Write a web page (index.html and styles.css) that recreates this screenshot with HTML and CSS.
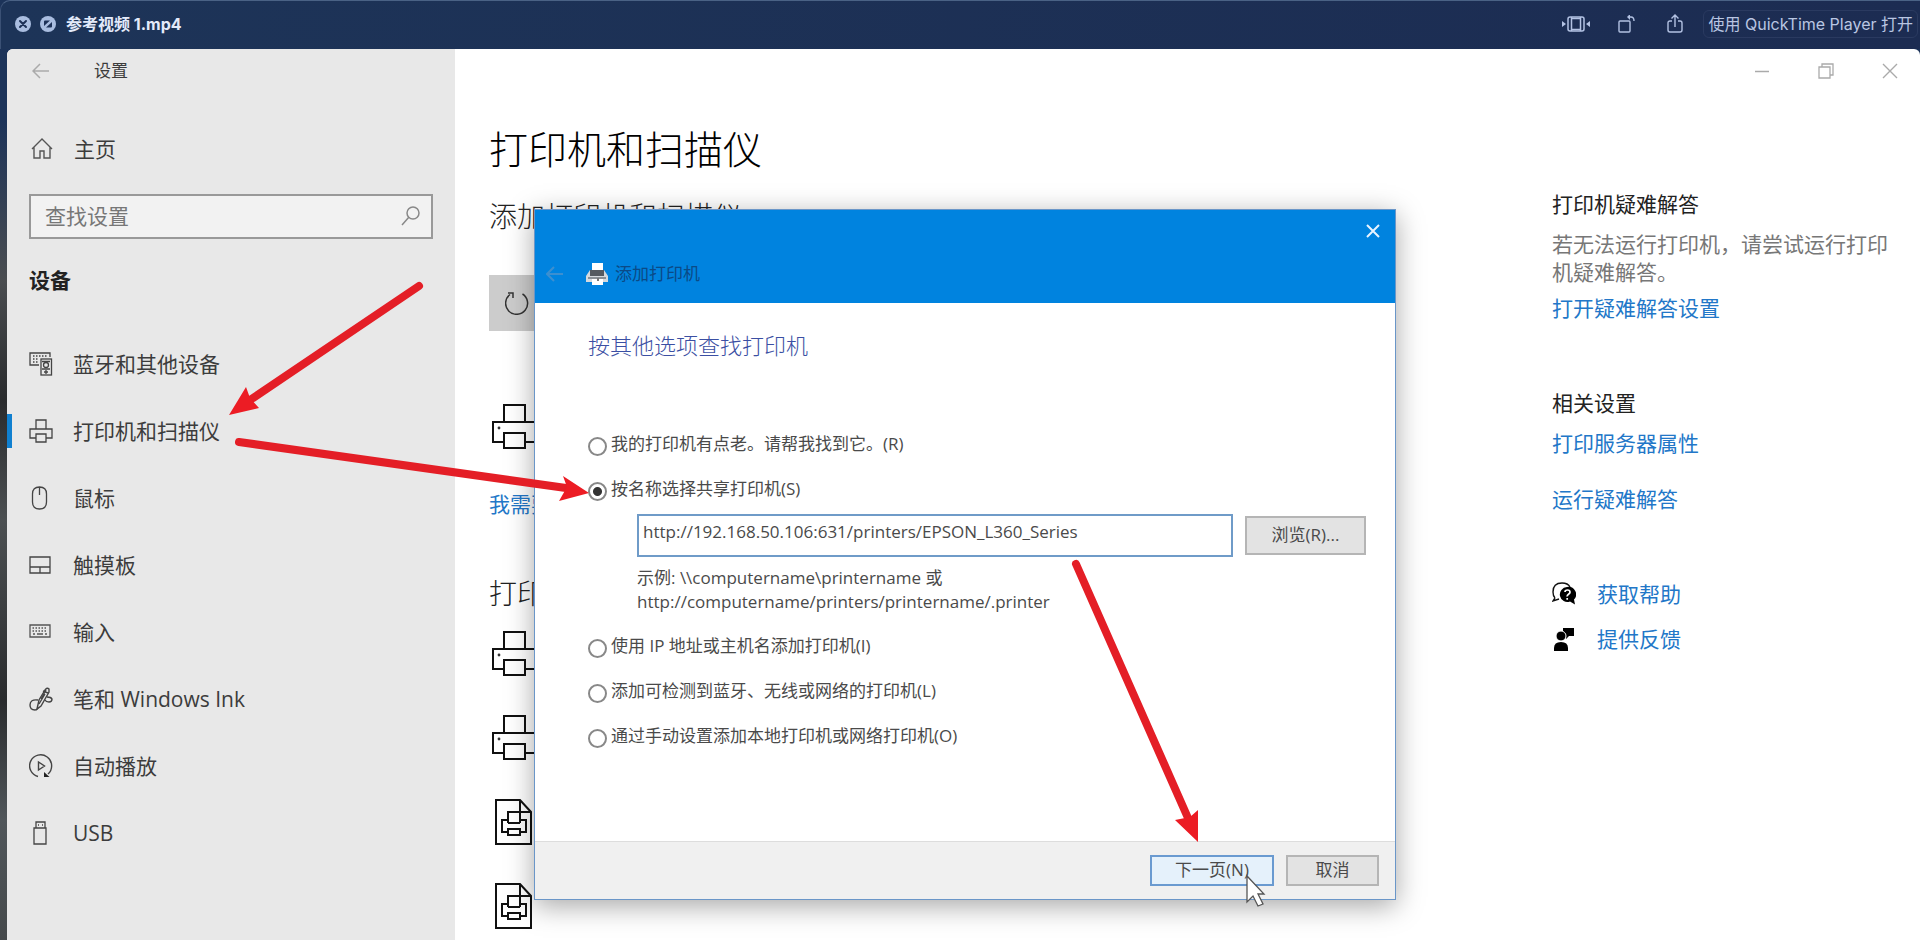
FILE: index.html
```html
<!DOCTYPE html>
<html lang="zh-CN">
<head>
<meta charset="utf-8">
<title>参考视频1.mp4</title>
<link rel="stylesheet" href="styles.css">
</head>
<body>
<svg class="defs" aria-hidden="true">
  <symbol id="i-printer" viewBox="0 0 48 46"><g fill="none" stroke="#111" stroke-width="2"><path d="M12 18V1h21v17M12 38H1V18h46v20H33M12 29h21v15H12z"/></g><circle cx="7" cy="24" r="1.4" fill="#333"/></symbol>
  <symbol id="i-docprinter" viewBox="0 0 38 46"><g fill="none" stroke="#111" stroke-width="2"><path d="M1 1h24l11 12v32H1zM25 1v12h11"/><path d="M13 24V13h12v11M13 33H7V21h6M25 21h6v12h-6M13 24h12M13 30h12v6H13z"/></g></symbol>
</svg>

<header class="titlebar">
  <button class="tb-icon" aria-label="关闭"><svg width="16" height="16" viewBox="0 0 16 16"><circle cx="8" cy="8" r="8" fill="#a9bde0"/><path d="M5 5l6 6M11 5l-6 6" stroke="#1d3157" stroke-width="2" stroke-linecap="round"/></svg></button>
  <button class="tb-icon" aria-label="全屏"><svg width="16" height="16" viewBox="0 0 16 16"><circle cx="8" cy="8" r="8" fill="#a9bde0"/><path d="M4 10V5.500q0-1 1-1h5zM12 6v4.500q0 1-1 1H6z" fill="#1d3157"/></svg></button>
  <h1 class="file-name">参考视频 1.mp4</h1>
  <div class="tb-tools">
    <button class="tb-tool" aria-label="修剪"><svg width="28" height="18" viewBox="0 0 28 18"><g fill="none" stroke="#b3c2e3" stroke-width="1.500"><rect x="6" y="2" width="16" height="14" rx="2"/><path d="M9.500 2v14M18.500 2v14M9.500 3.500h9M9.500 14.500h9"/></g><path d="M0 6l4 3-4 3zM28 6l-4 3 4 3z" fill="#b3c2e3"/></svg></button>
    <button class="tb-tool" aria-label="旋转"><svg width="18" height="18" viewBox="0 0 18 18"><g fill="none" stroke="#b3c2e3" stroke-width="1.400"><rect x="1" y="6" width="11" height="11" rx="1"/><path d="M11 2h2q3 0 3 4"/></g><path d="M12 -1v6l-3-3z" fill="#b3c2e3"/></svg></button>
    <button class="tb-tool" aria-label="共享"><svg width="16" height="20" viewBox="0 0 16 20"><g fill="none" stroke="#b3c2e3" stroke-width="1.400"><path d="M5 7H3Q1 7 1 9v7q0 2 2 2h10q2 0 2-2V9q0-2-2-2h-2M8 13V1M4.500 4.500L8 1l3.500 3.500"/></g></svg></button>
    <button class="open-with">使用 QuickTime Player 打开</button>
  </div>
</header>

<div class="video">
  <nav class="sidebar">
    <div class="side-top">
      <button class="plain" aria-label="返回"><svg width="18" height="16" viewBox="0 0 18 16"><path d="M17 8H1M8 1L1 8l7 7" fill="none" stroke="#aaa" stroke-width="1.500"/></svg></button>
      <span>设置</span>
    </div>
    <a class="home" href="#"><svg width="22" height="22" viewBox="0 0 22 22"><path d="M1 11L11 1l10 10M3 9v11h6v-7h4v7h6V9" fill="none" stroke="#555" stroke-width="1.400"/></svg>主页</a>
    <label class="search"><input type="text" placeholder="查找设置" aria-label="查找设置"><svg width="20" height="20" viewBox="0 0 20 20"><g fill="none" stroke="#888" stroke-width="1.500"><circle cx="12" cy="7" r="6"/><path d="M8 11L1 19"/></g></svg></label>
    <h2 class="group">设备</h2>
    <ul class="nav">
      <li><a href="#"><svg width="24" height="24" viewBox="0 0 24 24"><g fill="none" stroke="#444" stroke-width="1.300"><path d="M10 13H1V1h20v4"/><path d="M4 4h15M4 7h6M4 10h6" stroke-dasharray="1.500 1.500"/><rect x="12" y="7" width="10.500" height="16"/><circle cx="17" cy="13" r="2.500"/><path d="M13 9.500h8M13 17h8M17 18v4M15 20h4"/></g></svg>蓝牙和其他设备</a></li>
      <li class="active"><a href="#"><svg width="24" height="24" viewBox="0 0 24 24"><path d="M7 10V1h10v9M7 19H1v-9h22v9h-6M7 15h10v8H7z" fill="none" stroke="#444" stroke-width="1.300"/></svg>打印机和扫描仪</a></li>
      <li><a href="#"><svg width="24" height="24" viewBox="0 0 24 24"><path d="M10.500 1q7 0 7 7v8q0 7-7 7t-7-7V8q0-7 7-7zM10.500 1v8" fill="none" stroke="#444" stroke-width="1.300"/></svg>鼠标</a></li>
      <li><a href="#"><svg width="24" height="24" viewBox="0 0 24 24"><path d="M1 4h20v16H1zM1 14h20M11 14v6" fill="none" stroke="#444" stroke-width="1.300"/></svg>触摸板</a></li>
      <li><a href="#"><svg width="24" height="24" viewBox="0 0 24 24"><g fill="none" stroke="#555" stroke-width="1.300"><path d="M1 5h20v12H1z"/><path d="M3.500 8h15M3.500 11h15" stroke-dasharray="1.500 1.500"/><path d="M4 14h2M8 14h6M16 14h2"/></g></svg>输入</a></li>
      <li><a href="#"><svg width="24" height="24" viewBox="0 0 24 24"><g fill="none" stroke="#444" stroke-width="1.400"><path d="M8 22l2-9 6-10q2-3 4-1l0 3-8 14z"/><path d="M12 12l5-9M14 4l5 2M10 17l6-10"/><path d="M9 13q-8-1-8 5 0 5 5 5 2 0 3-2M18 10q4 0 5 2 0 3-3 3t-4-2"/></g></svg>笔和 Windows Ink</a></li>
      <li><a href="#"><svg width="24" height="24" viewBox="0 0 24 24"><path d="M9 22.500A11 11 0 1 1 19 20M9.500 8v8l6-4z" fill="none" stroke="#444" stroke-width="1.400"/><path d="M15 18v5h5.500z" fill="#222"/></svg>自动播放</a></li>
      <li><a href="#"><svg width="24" height="24" viewBox="0 0 24 24"><path d="M5 7h12v16H5zM7 7V1h9v6M9 4h1M13 4h1" fill="none" stroke="#444" stroke-width="1.300"/></svg>USB</a></li>
    </ul>
  </nav>

  <main class="main">
    <div class="win-controls">
      <button class="plain" aria-label="最小化"><svg width="16" height="16" viewBox="0 0 16 16"><path d="M1 8.500h14" stroke="#aaa" stroke-width="1.300"/></svg></button>
      <button class="plain" aria-label="还原"><svg width="16" height="16" viewBox="0 0 16 16"><path d="M1 4h11v11H1zM4 4V1h11v11h-3" fill="none" stroke="#aaa" stroke-width="1.300"/></svg></button>
      <button class="plain" aria-label="关闭窗口"><svg width="16" height="16" viewBox="0 0 16 16"><path d="M1 1l14 14M15 1L1 15" stroke="#aaa" stroke-width="1.400"/></svg></button>
    </div>
    <div class="columns">
      <section class="content">
        <h2 class="page-title">打印机和扫描仪</h2>
        <h3 class="sub">添加打印机和扫描仪</h3>
        <button class="refresh" aria-label="刷新"><svg width="24" height="24" viewBox="0 0 24 24"><path d="M17.500 3A11 11 0 1 1 5 3.500M3 2h5v5" fill="none" stroke="#333" stroke-width="1.500"/></svg></button>
        <svg class="scanner" width="48" height="46"><use href="#i-printer"/></svg>
        <a class="link need" href="#">我需要</a>
        <h3 class="sub list-title">打印</h3>
        <ul class="devices">
          <li><svg width="48" height="46"><use href="#i-printer"/></svg></li>
          <li><svg width="48" height="46"><use href="#i-printer"/></svg></li>
          <li class="doc"><svg width="38" height="46"><use href="#i-docprinter"/></svg></li>
          <li class="doc"><svg width="38" height="46"><use href="#i-docprinter"/></svg></li>
        </ul>
      </section>
      <aside class="aside">
        <h4>打印机疑难解答</h4>
        <p>若无法运行打印机，请尝试运行打印机疑难解答。</p>
        <a class="link" href="#">打开疑难解答设置</a>
        <h4 class="related">相关设置</h4>
        <a class="link server" href="#">打印服务器属性</a>
        <a class="link run" href="#">运行疑难解答</a>
        <a class="link help" href="#"><svg width="24" height="24" viewBox="0 0 24 24"><path d="M3 16q-2-2-2-6 0-9 9-9 6 0 8 4M3 16l-2 3 6-2" fill="none" stroke="#111" stroke-width="1.400"/><path d="M15 5a7.500 7.500 0 1 0 3 14.500l5 3-1-5A7.500 7.500 0 0 0 15 5z" fill="#000"/><path d="M13 10q0-2 2.500-2t2.500 2.200q0 1-1.500 2t-1.300 2.300M15.200 16v1.800" fill="none" stroke="#fff" stroke-width="1.700"/></svg>获取帮助</a>
        <a class="link feedback" href="#"><svg width="24" height="24" viewBox="0 0 24 24"><path d="M11 1h11v8h-5l-3 3V9h-3z"/><circle cx="9" cy="9" r="5" stroke="#fff"/><path d="M2 24v-3q0-6 7-6t7 6v3z"/></svg>提供反馈</a>
      </aside>
    </div>

    <form class="dialog" role="dialog" aria-label="添加打印机">
      <div class="dlg-head">
        <button type="button" class="plain dlg-close" aria-label="关闭对话框"><svg width="16" height="16" viewBox="0 0 16 16"><path d="M2 2l12 12M14 2L2 14" stroke="#e8f4ff" stroke-width="2"/></svg></button>
        <div class="dlg-name">
          <svg width="18" height="16" viewBox="0 0 18 16"><path d="M17 8H2M8 1L1 8l7 7" fill="none" stroke="#3c8fd0" stroke-width="2"/></svg>
          <svg class="dlg-printer" width="24" height="24" viewBox="0 0 24 24"><path d="M7 1h11v8H7z" fill="#fff"/><path d="M1 14l4-6h14l4 6v6H1z" fill="#d5d9dd"/><path d="M5 8h14v6H5z" fill="#555a60"/><path d="M3 15h18v2H3z" fill="#8a9096"/><path d="M7 17h11v6H7z" fill="#fff"/><path d="M12 16h2v3h-2z" fill="#777"/></svg>
          <span>添加打印机</span>
        </div>
      </div>
      <div class="dlg-body">
        <h3 class="dlg-title">按其他选项查找打印机</h3>
        <label class="opt"><input type="radio" name="how">我的打印机有点老。请帮我找到它。(R)</label>
        <label class="opt"><input type="radio" name="how" checked>按名称选择共享打印机(S)</label>
        <div class="path-row">
          <input class="path" type="text" aria-label="打印机地址" value="http://192.168.50.106:631/printers/EPSON_L360_Series">
          <button type="button" class="btn browse">浏览(R)...</button>
        </div>
        <p class="example">示例: \\computername\printername 或<br>http://computername/printers/printername/.printer</p>
        <label class="opt"><input type="radio" name="how">使用 IP 地址或主机名添加打印机(I)</label>
        <label class="opt"><input type="radio" name="how">添加可检测到蓝牙、无线或网络的打印机(L)</label>
        <label class="opt"><input type="radio" name="how">通过手动设置添加本地打印机或网络打印机(O)</label>
      </div>
      <div class="dlg-foot">
        <button type="button" class="btn next">下一页(N)</button>
        <button type="button" class="btn cancel">取消</button>
      </div>
    </form>
  </main>
</div>

<svg class="marks" width="1920" height="940" viewBox="0 0 1920 940" aria-hidden="true">
  <g stroke="#e41e26" stroke-width="8" stroke-linecap="round"><path d="M419 286L250 400M239 442L566 488M1076 564L1188 818"/></g>
  <g fill="#ec1c24"><path d="M229 415L246 387 250 398 259 408z"/><path d="M589 493L563 476 567 487 559 501z"/><path d="M1198 842L1175 820 1190 817 1198 810z"/></g>
  <path d="M1247 876v26l6-6 5 10 5-2-5-10h6z" fill="#fff" stroke="#555" stroke-width="1.300"/>
</svg>
</body>
</html>
```

FILE: styles.css
```css
* { box-sizing: border-box; }
body {
  margin: 0;
  height: 100vh;
  display: flex;
  flex-direction: column;
  overflow: hidden;
  position: relative;
  background: linear-gradient(#1c3359, #1c3359 120px, #4a4d50 280px, #292b2d 400px, #4c5052 520px, #292b2d 700px, #50565a 820px, #45494b);
  font-family: "Open Sans", "Noto Sans CJK SC", sans-serif;
  font-size: 21px;
  line-height: 28px;
  color: #3c3c3c;
}
h1, h2, h3, h4, p, ul { margin: 0; padding: 0; font-weight: 400; }
ul { list-style: none; }
a { color: inherit; text-decoration: none; }
button, input { font: inherit; color: inherit; margin: 0; }
svg { display: block; flex: none; }
.defs { position: absolute; width: 0; height: 0; }
.plain { border: 0; background: none; padding: 0; }

.titlebar {
  height: 49px;
  flex: none;
  display: flex;
  align-items: center;
  padding: 0 2px 2px 14px;
  background: linear-gradient(90deg, #1d3458, #1c2c52);
  border-top: 1px solid #4a6285;
  border-left: 1px solid #3b5175;
  border-radius: 10px 0 0 0;
}
.tb-icon, .tb-tool { border: 0; background: none; padding: 0; }
.tb-icon { margin-right: 9px; }
.file-name {
  font-family: Inter, "Noto Sans CJK SC", sans-serif;
  font-size: 16px;
  font-weight: 700;
  line-height: 24px;
  color: #e3eafa;
  margin-left: 1px;
}
.tb-tools { margin-left: auto; display: flex; align-items: center; }
.tb-tool { margin-right: 28px; }
.tb-tool + .tb-tool { margin-right: 31px; }
.tb-tool + .tb-tool + .tb-tool { margin-right: 20px; }
.open-with {
  font-family: Inter, "Noto Sans CJK SC", sans-serif;
  font-size: 16px;
  line-height: 24px;
  height: 28px;
  color: #b9c6e2;
  background: none;
  border: 1px solid #2a3a60;
  border-radius: 6px;
  padding: 0 4px;
  white-space: nowrap;
}

.video {
  flex: 1;
  min-height: 0;
  display: flex;
  margin-left: 7px;
  border-radius: 6px 6px 0 0;
  overflow: hidden;
  background: #fff;
}
.sidebar { width: 448px; flex: none; background: #e8e8e8; }
.side-top {
  height: 44px;
  display: flex;
  align-items: center;
  gap: 44px;
  padding-left: 25px;
  font-size: 17px;
}
.home {
  display: flex;
  align-items: center;
  gap: 21px;
  height: 40px;
  margin-top: 36px;
  padding-left: 24px;
}
.search {
  display: flex;
  align-items: center;
  height: 45px;
  margin: 25px 22px 0;
  padding: 0 10px 2px 14px;
  border: 2px solid #999;
  background: #f2f2f2;
}
.search input {
  flex: 1;
  min-width: 0;
  border: 0;
  outline: 0;
  padding: 0;
  background: none;
}
.search input::placeholder { color: #777; opacity: 1; }
.group { margin: 27px 0 0 22px; font-size: 21px; font-weight: 700; color: #222; }
.nav { margin-top: 36px; }
.nav a {
  display: flex;
  align-items: center;
  gap: 20px;
  height: 67px;
  padding-left: 22px;
}
.nav .active { background: linear-gradient(#1080d0, #1080d0) left center / 5px 34px no-repeat; }

.main { flex: 1; min-width: 0; position: relative; }
.win-controls {
  height: 44px;
  display: flex;
  justify-content: flex-end;
  align-items: center;
  gap: 48px;
  padding-right: 22px;
}
.columns { display: flex; justify-content: space-between; padding: 0 24px 0 34px; }
.content { padding-top: 31px; }
.page-title { font-size: 39px; line-height: 50px; font-weight: 300; color: #000; }
.sub { font-size: 28px; line-height: 36px; font-weight: 300; margin-top: 24px; color: #222; }
.refresh {
  display: flex;
  align-items: center;
  width: 300px;
  height: 56px;
  margin-top: 41px;
  padding: 0 16px;
  border: 0;
  background: #ccc;
}
.scanner { margin: 73px 0 0 3px; }
.link { display: block; color: #2277c8; }
.need { margin-top: 40px; }
.list-title { margin-top: 57px; }
.devices { margin-top: 20px; display: grid; gap: 38px; padding-left: 3px; }
.devices .doc { padding-left: 3px; }

.aside { width: 344px; padding-top: 97px; }
.aside h4 { font-size: 21px; color: #222; }
.aside p { margin: 12px 0 8px; color: #777; }
.aside .related { margin-top: 67px; }
.aside .server { margin-top: 12px; }
.aside .run { margin-top: 28px; }
.aside .help, .aside .feedback { display: flex; align-items: center; gap: 21px; }
.aside .help { margin-top: 67px; }
.aside .feedback { margin-top: 17px; }

.dialog {
  position: absolute;
  left: 79px;
  top: 160px;
  width: min(862px, calc(100% - 80px));
  height: 691px;
  display: flex;
  flex-direction: column;
  background: #fff;
  border: 1px solid #6a96c8;
  box-shadow: 0 6px 26px rgba(0, 0, 0, .35);
  font-size: 17px;
  line-height: 24px;
  color: #4a4a4a;
}
.dlg-head { height: 93px; background: #0083df; }
.dlg-close { display: flex; align-items: center; margin-left: auto; padding: 0 14px; height: 42px; }
.dlg-name {
  display: flex;
  align-items: center;
  padding: 10px 0 0 11px;
  color: #0b4a86;
}
.dlg-printer { margin: 0 6px 0 21px; }
.dlg-body { flex: 1; padding: 27px 29px 0 53px; }
.dlg-title { font-size: 22px; line-height: 30px; color: #3b4fa3; font-weight: 300; margin-bottom: 72px; }
.opt { display: flex; align-items: center; gap: 4px; height: 24px; margin-bottom: 21px; }
.opt input {
  appearance: none;
  width: 19px;
  height: 19px;
  border: 2px solid #888;
  border-radius: 50%;
  background: #fff;
  margin-top: 4px;
}
.opt input:checked { background: radial-gradient(circle, #333 0 4px, #fff 5px); }
.path-row { display: flex; align-items: center; gap: 12px; padding-left: 49px; margin-top: -8px; }
.path {
  flex: 1;
  min-width: 0;
  height: 43px;
  padding: 0 4px 9px;
  border: 2px solid #6f9bc8;
  background: #fff;
  outline: 0;
}
.btn { border: 2px solid #b5b5b5; background: #e3e3e3; padding: 0 0 2px; height: 31px; line-height: 24px; }
.browse { width: 121px; height: 39px; }
.example { margin: 9px 0 20px 49px; }
.dlg-foot {
  height: 58px;
  display: flex;
  align-items: center;
  justify-content: flex-end;
  gap: 12px;
  padding-right: 16px;
  background: #f0f0f0;
  border-top: 1px solid #ddd;
}
.next { width: 124px; background: #e5f1fb; border-color: #6a9ad0; }
.cancel { width: 93px; }

.marks { position: absolute; left: 0; top: 0; pointer-events: none; }
```
